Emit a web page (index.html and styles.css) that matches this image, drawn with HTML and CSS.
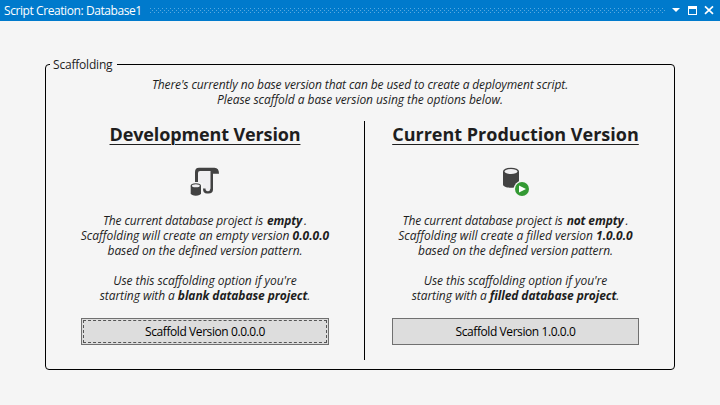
FILE: index.html
```
<!DOCTYPE html>
<html lang="en">
<head>
<meta charset="utf-8">
<title>Script Creation: Database1</title>
<link rel="stylesheet" href="styles.css">
</head>
<body>
<div class="window">
  <header class="titlebar">
    <span class="title">Script Creation: Database1</span>
    <span class="grip"></span>
    <svg class="controls" width="55" height="21" viewBox="0 0 55 21">
      <path d="M7 8h8l-4 4z" fill="#fff"/>
      <path d="M23 6h9v9h-9zM24 9v5h7V9z" fill="#fff" fill-rule="evenodd"/>
      <path d="M40 6.300l8 7.500M48 6.300l-8 7.500" stroke="#fff" stroke-width="1.700" fill="none"/>
    </svg>
  </header>
  <main class="content">
    <fieldset class="group">
      <legend>Scaffolding</legend>
      <div class="text intro">
        <div class="line i1">There's currently no base version that can be used to create a deployment script.</div>
        <div class="line i2">Please scaffold a base version using the options below.</div>
      </div>
      <div class="options">
        <section class="option dev">
          <h2>Development Version</h2>
          <svg class="icon" width="32" height="32" viewBox="0 0 32 32">
            <path d="M9 4h13v23H14V17H9z" fill="#f0eff1"/>
            <path d="M10 1.700h15.500q4.500 0 4.500 6h-6V23.500q0 4-4.500 4h-1.500q-4 0-4-5h2.500q0 2.700 2.300 2.700t2.700-2.700V5H11Q9 5 9 7v9H6V6Q6 1.700 10 1.700z" fill="#424242"/>
            <path d="M1.700 19.800v7.500c0 3.200 10.300 3.200 10.300 0v-7.500z" fill="#424242"/>
            <ellipse cx="6.850" cy="19.800" rx="5.150" ry="2.500" fill="#424242"/>
            <ellipse cx="6.850" cy="19.800" rx="3.900" ry="1.500" fill="#f0eff1"/>
          </svg>
          <div class="text">
            <div class="line d1"><span>The current database project is <b>empty</b> .</span></div>
            <div class="line d2"><span>Scaffolding will create an empty version <b>0.0.0.0</b></span></div>
            <div class="line d3">based on the defined version pattern.</div>
            <div class="line gap d4">Use this scaffolding option if you're</div>
            <div class="line d5"><span>starting with a <b>blank database project</b>.</span></div>
          </div>
          <button class="focused"><span>Scaffold Version 0.0.0.0</span></button>
        </section>
        <section class="option prod">
          <h2>Current Production Version</h2>
          <svg class="icon" width="32" height="32" viewBox="0 0 32 32">
            <path d="M3 5.500v13c0 4.300 16 4.300 16 0v-13z" fill="#424242"/>
            <ellipse cx="11" cy="5.500" rx="8" ry="3.800" fill="#424242"/>
            <ellipse cx="11" cy="5.500" rx="6.400" ry="2.500" fill="#f0eff1"/>
            <circle cx="22" cy="23" r="8.300" fill="#f5f5f5"/>
            <circle cx="22" cy="23" r="7" fill="#339933"/>
            <path d="M19 19.500l7 3.500-7 3.500z" fill="#fff"/>
          </svg>
          <div class="text">
            <div class="line p1"><span>The current database project is <b>not empty</b> .</span></div>
            <div class="line p2"><span>Scaffolding will create a filled version <b>1.0.0.0</b></span></div>
            <div class="line p3">based on the defined version pattern.</div>
            <div class="line gap p4">Use this scaffolding option if you're</div>
            <div class="line p5"><span>starting with a <b>filled database project</b>.</span></div>
          </div>
          <button><span>Scaffold Version 1.0.0.0</span></button>
        </section>
      </div>
    </fieldset>
  </main>
</div>
</body>
</html>
```

FILE: styles.css
```
* { box-sizing: border-box; }
body { margin: 0; font: 12px/15px "Open Sans", "Noto Sans", sans-serif; color: #1e1e1e; }
.window { height: 405px; background: #f5f5f5; overflow: hidden; }
.titlebar { display: flex; height: 21px; align-items: center; background: #007acc; color: #fff; padding-left: 4px; }
.title { width: 146px; white-space: nowrap; letter-spacing: -0.42px; }
.grip {
  flex: 1; height: 5px; margin-bottom: 1px;
  background:
    conic-gradient(from 0deg at 1px 1px, transparent 270deg, #59a8de 0) 0 0 / 4px 4px,
    conic-gradient(from 0deg at 1px 1px, transparent 270deg, #59a8de 0) 2px 2px / 4px 4px;
}
.controls { flex: none; }
.content { padding: 36px 45px 0; }
.group { height: 313px; margin: 0; padding: 5px 0 0; border: 1px solid #000; border-radius: 4px; }
legend { margin-left: 4px; padding: 0 5px 0 3px; height: 15px; letter-spacing: -0.2px; }
.text { font-style: italic; text-align: center; }
.line { white-space: pre; height: 15px; line-height: 15px; }
.gap { margin-top: 15px; }
.i1 { letter-spacing: -0.115px; }
.i2 { letter-spacing: -0.055px; }
.d1, .p1 { letter-spacing: -0.14px; }
.d1 b, .p1 b { margin-left: 1px; margin-right: -1px; }
.d2, .p2 { letter-spacing: -0.02px; }
.d3, .p3, .d5, .p5 { letter-spacing: -0.08px; }
.d4, .p4 { letter-spacing: -0.055px; }
.options { display: flex; height: 239px; margin-top: 14px; }
.option { display: flex; flex-direction: column; align-items: center; }
.dev { width: 319px; border-right: 1px solid #000; }
.prod { width: 309px; padding-right: 8px; }
h2 { margin: 0; font-size: 18px; line-height: 26px; font-weight: 700; white-space: nowrap; text-decoration: underline; text-decoration-thickness: 1px; text-underline-offset: 3px; }
.dev h2 { letter-spacing: -0.13px; }
.icon { margin: 19px 0 15px; }
button { width: 248px; height: 27px; margin-top: 15px; padding: 1px; border: 1px solid #707070; background: #ddd; font: inherit; letter-spacing: -0.42px; color: #000; }
.prod button { width: 247px; }
button span { display: flex; align-items: center; justify-content: center; height: 23px; }
.focused span { border: 1px dashed #555; }
```
